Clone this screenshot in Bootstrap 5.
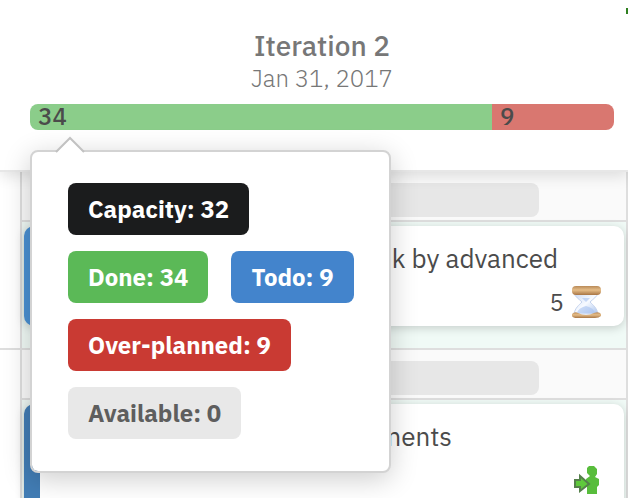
<!DOCTYPE html>
<html lang="en">
<head>
<meta charset="utf-8">
<meta name="viewport" content="width=device-width, initial-scale=1">
<title>Iteration 2</title>
<link href="https://cdn.jsdelivr.net/npm/bootstrap@5.3.0/dist/css/bootstrap.min.css" rel="stylesheet">
<style>
body { font-family: "IBM Plex Sans", "Noto Sans", sans-serif; color: #4b4b4b; background: #fff; }
.iteration-head { z-index: 3; padding: 28px 14px 40px 30px; border-bottom: 2px solid #e7e7e7; box-shadow: 0 4px 14px rgba(0,0,0,.12); }
.iteration-head h1 { font-size: 28px; line-height: 36px; font-weight: 500; color: #777; }
.iteration-date { font-size: 24px; line-height: 28px; font-weight: 300; color: #777; margin-bottom: 12px; }
.load-track { height: 26px; border-radius: 8px; font-size: 24px; background: none; overflow: visible; }
.load-track .progress-bar { color: #4b4b4b; text-align: left; padding-left: 8px; font-weight: 500; line-height: 24px; overflow: visible; justify-content: flex-start; }
.load-track .load-done { background: #8bcd8a; border-radius: 8px 0 0 8px; }
.load-track .load-over { background: #d97770; border-radius: 0 8px 8px 0; }
.indicator { top: 8px; right: 0; width: 2px; height: 6px; background: #2f8020; }
.load-popover { top: 46px; left: 0; width: 361px; max-width: none; border: 2px solid #d3d3d3; border-radius: 8px; box-shadow: 0 6px 28px rgba(0,0,0,.2); font-family: inherit; }
.load-popover .popover-body { padding: 31px 30px 32px 36px; gap: 16px 23px; }
.load-arrow { top: -17px; left: 22px; }
.load-label { font-size: 24px; line-height: 32px; font-weight: 700; padding: 10px 20px; border-radius: 8px; color: #fff; }
.label-capacity { background: #1b1c1d; }
.label-done { background: #5bb957; }
.label-todo { background: #4384cc; }
.label-over { background: #c93a33; }
.label-available { background: #e8e8e8; color: #5e5e5e; }
.board { min-height: 0; }
.gutter { width: 20px; }
.gutter-cell { height: 178px; border-bottom: 2px solid #dedede; }
.lanes { border: solid #dedede; border-width: 0 2px; }
.lane { height: 178px; background: #f0faf6; border-bottom: 2px solid #dedede; }
.lane-head { height: 50px; padding-top: 11px; background: #fafafa; border-bottom: 2px solid #dedede; }
.lane-tag { height: 34px; margin: 0 87px 0 100px; border-radius: 8px; background: #e7e7e7; }
.story { height: 100px; margin: 4px 2px 0; border-radius: 10px; border-left: 16px solid #4a90d2; background: #fff; box-shadow: 0 2px 10px rgba(0,0,0,.18); }
.story-title { padding: 14px 66px 0 0; font-size: 26px; line-height: 36px; }
.story-second { border-left-color: #427db5; height: 120px; }
.story-second .story-title { padding-right: 172px; }
.story-info { padding: 8px 22px 0 0; font-size: 24px; line-height: 36px; gap: 6px; }
.story-second .story-info { padding: 10px 20px 0 0; }
</style>
<script src="https://cdn.jsdelivr.net/npm/bootstrap@5.3.0/dist/js/bootstrap.bundle.min.js"></script>
</head>
<body class="vh-100 overflow-hidden d-flex flex-column">
<header class="iteration-head position-relative bg-white flex-shrink-0">
  <span class="indicator position-absolute"></span>
  <h1 class="text-center mb-0">Iteration 2</h1>
  <p class="iteration-date text-center">Jan 31, 2017</p>
  <div class="position-relative">
    <div class="progress load-track">
      <div class="progress-bar load-done" style="width:79.1%">34</div>
      <div class="progress-bar load-over" style="width:20.9%">9</div>
    </div>
    <div class="popover load-popover position-absolute" role="tooltip">
      <svg class="load-arrow position-absolute" width="32" height="18" viewBox="0 0 32 18"><path d="M2 18 16 3 30 18Z" fill="#fff"/><path d="M2 17 16 3 30 17" fill="none" stroke="#c2c2c2" stroke-width="2"/></svg>
      <div class="popover-body d-flex flex-wrap">
        <span class="load-label label-capacity">Capacity: 32</span>
        <span class="load-label label-done">Done: 34</span>
        <span class="load-label label-todo">Todo: 9</span>
        <span class="load-label label-over">Over-planned: 9</span>
        <span class="load-label label-available">Available: 0</span>
      </div>
    </div>
  </div>
</header>
<main class="board d-flex flex-grow-1 overflow-hidden">
  <div class="gutter flex-shrink-0"><div class="gutter-cell"></div></div>
  <div class="lanes flex-grow-1">
    <section class="lane">
      <div class="lane-head"><div class="lane-tag"></div></div>
      <article class="story">
        <div class="story-title text-end">k by advanced</div>
        <div class="story-info d-flex justify-content-end align-items-center">
          <span>5</span>
          <svg width="32" height="34" viewBox="0 0 32 34" aria-label="Waiting">
            <defs>
              <linearGradient id="wood" x1="0" x2="0" y1="0" y2="1"><stop offset="0" stop-color="#b98a58"/><stop offset=".45" stop-color="#e5bd88"/><stop offset="1" stop-color="#a87646"/></linearGradient>
              <linearGradient id="glass" x1="0" x2="1" y1="0" y2="1"><stop offset="0" stop-color="#c9d9f5"/><stop offset=".5" stop-color="#f7faff"/><stop offset="1" stop-color="#a9c3ee"/></linearGradient>
            </defs>
            <path d="M4 8H28C27 12 23 14 20 17C23 20 27 23 28 29H4C5 23 9 20 12 17C9 14 5 12 4 8Z" fill="url(#glass)" stroke="#c6d4ee"/>
            <path d="M12 13H20L16 17ZM16 21Q24 23 25 28H7Q8 23 16 21Z" fill="#a9c3f0" opacity=".6"/>
            <rect x="2" y="1" width="29" height="9" rx="4" fill="url(#wood)"/>
            <path d="M2 29Q5 26 8 28Q16 32 24 28Q29 26 31 29V31Q29 33 25 33H7Q3 33 2 31Z" fill="url(#wood)"/>
          </svg>
        </div>
      </article>
    </section>
    <section class="lane">
      <div class="lane-head"><div class="lane-tag"></div></div>
      <article class="story story-second">
        <div class="story-title text-end">ments</div>
        <div class="story-info d-flex justify-content-end align-items-center">
          <svg width="32" height="32" viewBox="0 0 32 32" aria-label="Assigned">
            <path d="M17 2h5l3 3v5l-2 3 4 2v6l-2 2v7H15v-7l-1-2v-6l4-3-3-3V4Z" fill="#58bd3c"/>
            <path d="M3 16h5v-4l9 8-9 7v-4H3Z" fill="#5fc93c" stroke="#55804b" stroke-width="2"/>
          </svg>
        </div>
      </article>
    </section>
  </div>
</main>
</body>
</html>
